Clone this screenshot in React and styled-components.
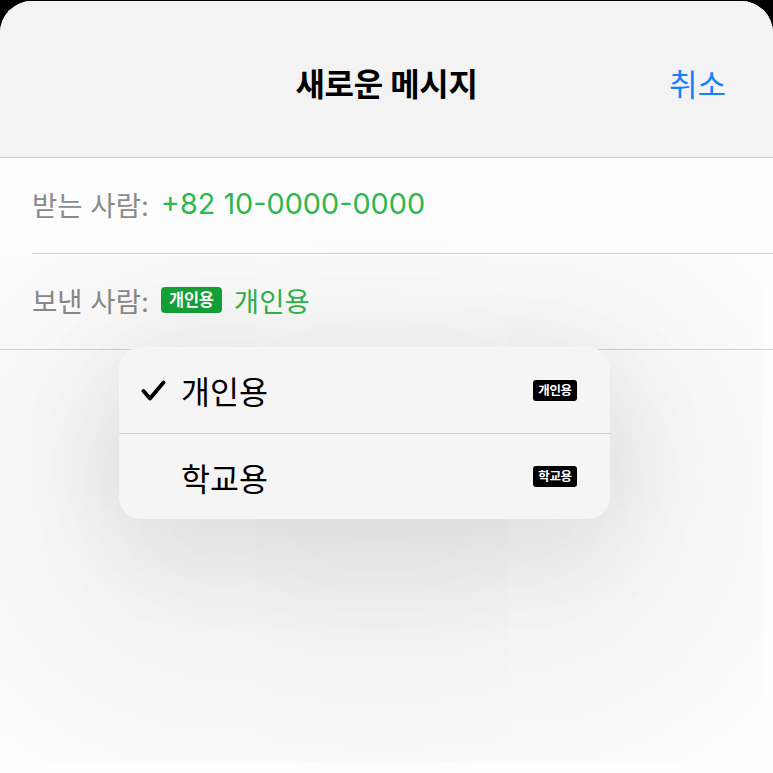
import React from "react";
import styled, { createGlobalStyle } from "styled-components";

const Global = createGlobalStyle`
  html, body { margin: 0; padding: 0; background: #000; }
  body { font-family: Inter, "Noto Sans CJK KR", sans-serif; }
  #root { width: 773px; height: 773px; overflow: hidden; }
`;

const Sheet = styled.div`
  position: relative;
  margin-top: 1px;
  height: 772px;
  background: #fdfdfd;
  border-radius: 32px 32px 0 0;
  overflow: hidden;
  display: flex;
  flex-direction: column;
`;

const Header = styled.header`
  position: relative;
  z-index: 2;
  height: 157px;
  flex: none;
  background: #f3f3f3;
  border-bottom: 1px solid #cacaca;
  display: grid;
  grid-template-columns: 1fr auto 1fr;
  align-items: center;
  padding: 6px 47px 0 47px;
  box-sizing: border-box;
`;

const Title = styled.h1`
  grid-column: 2;
  margin: 0;
  font-family: Inter, "Noto Sans CJK KR", sans-serif;
  font-size: 32px;
  font-weight: 700;
  color: #000;
  letter-spacing: -0.3px;
`;

const Cancel = styled.button`
  grid-column: 3;
  justify-self: end;
  border: 0;
  background: none;
  padding: 0;
  font-family: Inter, "Noto Sans CJK KR", sans-serif;
  font-size: 31px;
  font-weight: 400;
  color: #1681fb;
`;

const Fields = styled.div`
  display: flex;
  flex-direction: column;
`;

const Row = styled.div`
  height: 96px;
  box-sizing: border-box;
  margin-left: ${(p) => (p.$inset ? "32px" : "0")};
  padding-left: ${(p) => (p.$inset ? "0" : "32px")};
  padding-bottom: 4px;
  border-bottom: 1px solid #d6d6d6;
  display: flex;
  align-items: center;
  gap: 12px;
`;

const Label = styled.span`
  font-family: Inter, "Noto Sans CJK KR", sans-serif;
  font-size: 27.5px;
  color: #8a8a8a;
`;

const Phone = styled.span`
  font-family: Inter, "Noto Sans CJK KR", sans-serif;
  font-size: 28.8px;
  color: #2fb84c;
`;

const Value = styled.span`
  font-family: "Noto Sans CJK KR", sans-serif;
  font-size: 27.5px;
  color: #2fb84c;
`;

const Tag = styled.span`
  display: inline-flex;
  align-items: center;
  justify-content: center;
  box-sizing: border-box;
  height: ${(p) => (p.$small ? "21px" : "26px")};
  width: ${(p) => (p.$small ? "44px" : "61px")};
  border-radius: ${(p) => (p.$small ? "3px" : "4px")};
  background: ${(p) => (p.$dark ? "#000" : "#16a43a")};
  color: #fff;
  font-family: "Noto Sans CJK KR", sans-serif;
  font-weight: 700;
  font-size: ${(p) => (p.$small ? "12.5px" : "16.5px")};
  letter-spacing: -0.3px;
  line-height: 1;
`;

const Menu = styled.div`
  position: absolute;
  z-index: 1;
  left: 119px;
  top: 346px;
  width: 491px;
  background: #f5f5f5;
  border-radius: 22px;
  box-shadow: 0 20px 110px rgba(0, 0, 0, 0.09), 0 60px 300px 60px rgba(0, 0, 0, 0.1);
  display: flex;
  flex-direction: column;
`;

const Item = styled.div`
  height: 86px;
  box-sizing: border-box;
  display: grid;
  grid-template-columns: 62px 1fr auto;
  align-items: center;
  padding: 0 33px 0 0;
  border-top: ${(p) => (p.$first ? "0" : "1px solid #cfcfcf")};
`;

const Check = styled.span`
  display: flex;
  justify-content: flex-end;
  padding-right: 15px;
`;

const ItemText = styled.span`
  font-family: "Noto Sans CJK KR", sans-serif;
  font-size: 31.5px;
  color: #000;
`;

function CheckIcon() {
  return (
    <svg width="25" height="21" viewBox="0 0 25 21" aria-hidden="true">
      <path d="M2.5 11 L9 18.5 L22.5 2.5" fill="none" stroke="#000" strokeWidth="3.9" strokeLinecap="round" strokeLinejoin="round" />
    </svg>
  );
}

const options = [
  { name: "개인용", checked: true },
  { name: "학교용", checked: false },
];

export default function App() {
  return (
    <>
      <Global />
      <Sheet>
        <Header>
          <Title>새로운 메시지</Title>
          <Cancel>취소</Cancel>
        </Header>
        <Fields>
          <Row $inset>
            <Label>받는 사람:</Label>
            <Phone>+82 10-0000-0000</Phone>
          </Row>
          <Row>
            <Label>보낸 사람:</Label>
            <Tag>개인용</Tag>
            <Value>개인용</Value>
          </Row>
        </Fields>
        <Menu>
          {options.map((o, i) => (
            <Item key={o.name} $first={i === 0}>
              <Check>{o.checked ? <CheckIcon /> : null}</Check>
              <ItemText>{o.name}</ItemText>
              <Tag $small $dark>{o.name}</Tag>
            </Item>
          ))}
        </Menu>
      </Sheet>
    </>
  );
}
